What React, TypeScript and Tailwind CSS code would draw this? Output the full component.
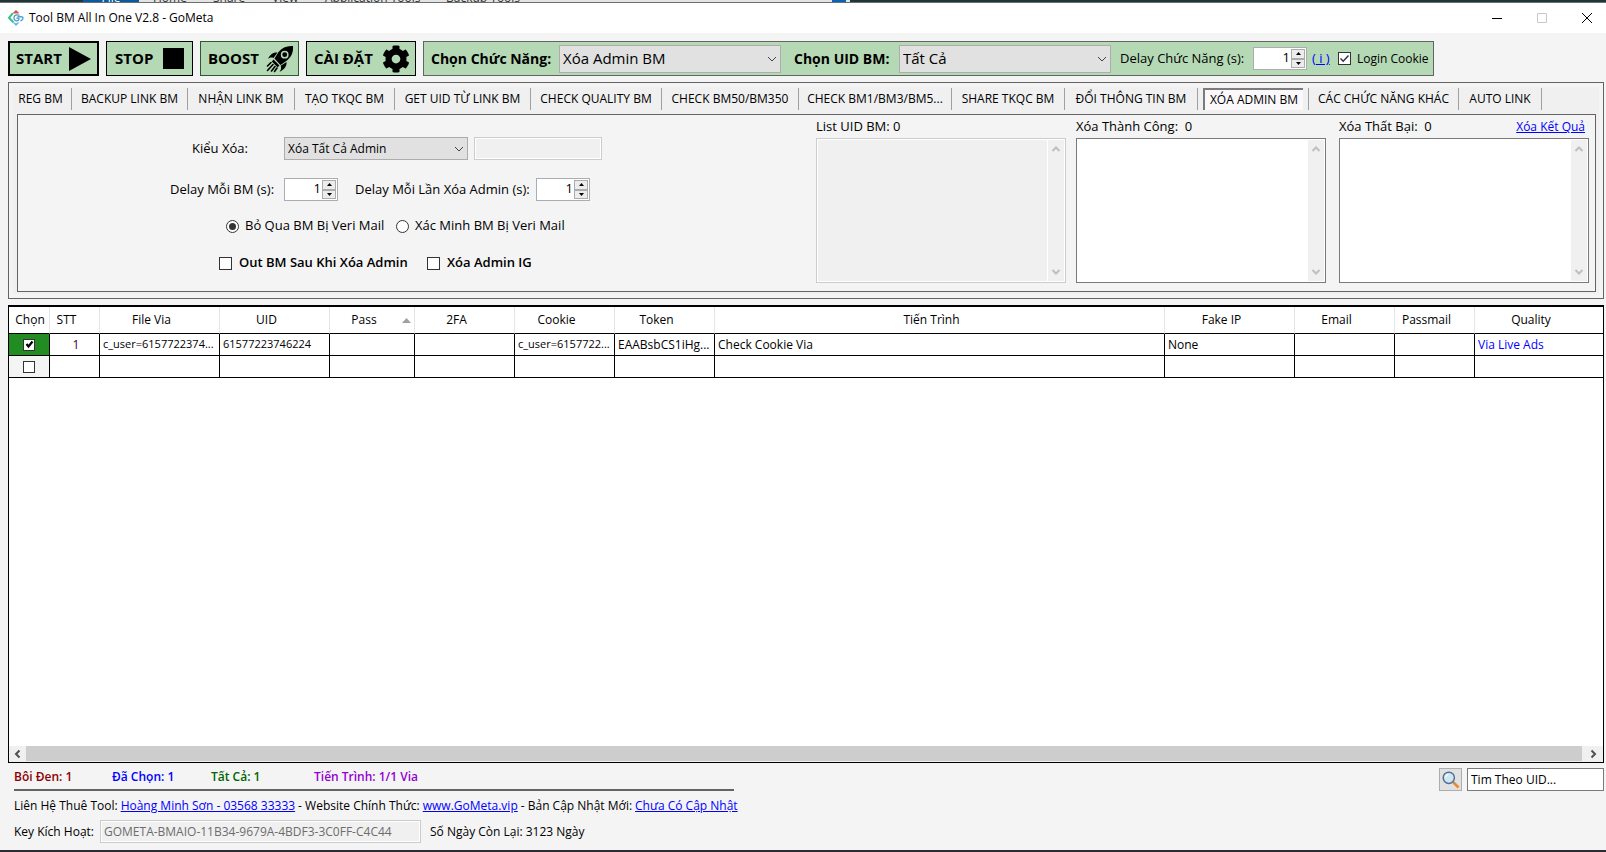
import React, { useState } from "react";
import { FaCog } from "react-icons/fa";

type Tab = { name: string; width: string };

const TABS: Tab[] = [
  { name: "REG BM", width: "w-[58px] pr-1" },
  { name: "BACKUP LINK BM", width: "w-[116px]" },
  { name: "NHẬN LINK BM", width: "w-[107px]" },
  { name: "TẠO TKQC BM", width: "w-[100px]" },
  { name: "GET UID TỪ LINK BM", width: "w-[136px]" },
  { name: "CHECK QUALITY BM", width: "w-[131px]" },
  { name: "CHECK BM50/BM350", width: "w-[137px]" },
  { name: "CHECK BM1/BM3/BM5...", width: "w-[153px]" },
  { name: "SHARE TKQC BM", width: "w-[113px]" },
  { name: "ĐỔI THÔNG TIN BM", width: "w-[133px]" },
  { name: "XÓA ADMIN BM", width: "w-[111px]" },
  { name: "CÁC CHỨC NĂNG KHÁC", width: "w-[150px]" },
  { name: "AUTO LINK", width: "w-[83px]" },
];

const COLUMNS = [
  { name: "STT", width: "w-[50px]", cell: "text-center text-[#3a003a]" },
  { name: "File Via", width: "w-[120px]", cell: "text-[11px]" },
  { name: "UID", width: "w-[110px]", cell: "text-[11px]" },
  { name: "Pass", width: "w-[85px]", cell: "" },
  { name: "2FA", width: "w-[100px]", cell: "" },
  { name: "Cookie", width: "w-[100px]", cell: "text-[11px]" },
  { name: "Token", width: "w-[100px]", cell: "" },
  { name: "Tiến Trình", width: "", cell: "" },
  { name: "Fake IP", width: "w-[130px]", cell: "" },
  { name: "Email", width: "w-[100px]", cell: "" },
  { name: "Passmail", width: "w-[80px]", cell: "" },
  { name: "Quality", width: "w-[128px]", cell: "text-[#0000ff]" },
];

const ROWS = [
  {
    checked: true,
    cells: ["1", "c_user=6157722374...", "61577223746224", "", "", "c_user=6157722...", "EAABsbCS1iHg...", "Check Cookie Via", "None", "", "", "Via Live Ads"],
  },
  { checked: false, cells: ["", "", "", "", "", "", "", "", "", "", "", ""] },
];

function Chevron({ className, d = "M1 3l4 4 4-4" }: { className: string; d?: string }) {
  return (
    <svg viewBox="0 0 10 10" className={className} fill="none" stroke="currentColor" aria-hidden="true">
      <path d={d} />
    </svg>
  );
}

function Select({ id, label, options, className, textClass }: { id: string; label: string; options: string[]; className: string; textClass: string }) {
  return (
    <span className={`grid shrink-0 items-center ${className}`}>
      <select
        id={id}
        aria-label={label}
        className={`col-start-1 row-start-1 h-full w-full appearance-none border border-[#adadad] bg-[#e1e1e1] pl-[3px] text-black outline-none ${textClass}`}
      >
        {options.map((o) => (
          <option key={o}>{o}</option>
        ))}
      </select>
      <Chevron className="pointer-events-none col-start-1 row-start-1 mr-1 h-[10px] w-[10px] justify-self-end text-[#444]" />
    </span>
  );
}

function Spinner({ id }: { id: string }) {
  const [value, setValue] = useState(1);
  return (
    <span className="flex h-[23px] w-[54px] shrink-0 border border-[#abadb3] bg-white p-px">
      <input
        id={id}
        type="text"
        inputMode="numeric"
        value={value}
        onChange={(e) => setValue(Number(e.target.value) || 0)}
        className="h-[16px] min-w-0 flex-1 bg-transparent pr-px text-right text-[13px] leading-[16px] outline-none"
      />
      <span className="flex w-[14px] flex-col">
        <button type="button" aria-label="Tăng" onClick={() => setValue(value + 1)} className="flex flex-1 items-center justify-center border border-[#acacac] bg-[#ececec]">
          <svg viewBox="0 0 5 3" className="h-[3px] w-[5px]" aria-hidden="true"><path d="M0 3L2.500 0 5 3z" /></svg>
        </button>
        <button type="button" aria-label="Giảm" onClick={() => setValue(Math.max(0, value - 1))} className="flex flex-1 items-center justify-center border border-[#acacac] bg-[#ececec]">
          <svg viewBox="0 0 5 3" className="h-[3px] w-[5px]" aria-hidden="true"><path d="M0 0L2.500 3 5 0z" /></svg>
        </button>
      </span>
    </span>
  );
}

function Check({ id, label, defaultChecked, small, bold }: { id: string; label?: string; defaultChecked?: boolean; small?: boolean; bold?: boolean }) {
  return (
    <span className="grid shrink-0 place-items-center">
      <input
        id={id}
        type="checkbox"
        aria-label={label}
        defaultChecked={defaultChecked}
        className={`peer col-start-1 row-start-1 appearance-none border border-[#333] bg-white ${small ? "size-[12px]" : "size-[13px]"}`}
      />
      <svg viewBox="0 0 13 13" className="pointer-events-none invisible col-start-1 row-start-1 size-[13px] peer-checked:visible" fill="none" stroke={bold ? "#000" : "#333"} strokeWidth={bold ? 2.2 : 1.4} aria-hidden="true">
        <path d={bold ? "M3.500 6l2 2.500 4-5" : "M2.500 6.500l2.700 2.700 5.300-5.700"} />
      </svg>
    </span>
  );
}

function Radio({ id, defaultChecked }: { id: string; defaultChecked?: boolean }) {
  return (
    <span className="grid shrink-0 place-items-center">
      <input id={id} type="radio" name="veri" defaultChecked={defaultChecked} className="peer col-start-1 row-start-1 size-[13px] appearance-none rounded-full border border-[#333] bg-white" />
      <span className="pointer-events-none invisible col-start-1 row-start-1 size-[7px] rounded-full bg-[#333] peer-checked:visible" />
    </span>
  );
}

function ListBox({ id, disabled, children }: { id: string; disabled?: boolean; children: React.ReactNode }) {
  return (
    <div className="flex w-[250px] flex-col">
      <div className="flex h-[23px] justify-between pr-1 text-[13px] leading-[23px] whitespace-pre">{children}</div>
      <div className={`flex h-[145px] border bg-white p-px ${disabled ? "border-[#ccc]" : "border-[#7a7a7a]"}`}>
        <textarea id={id} disabled={disabled} className="min-w-0 flex-1 resize-none overflow-hidden bg-white outline-none disabled:bg-[#f0f0f0]" />
        <div className="ml-px flex w-[16px] flex-col items-center justify-between bg-[#f0f0f0] py-1 text-[#bfbfbf]">
          <Chevron className="size-[10px] stroke-2" d="M1.500 7L5 3.500 8.500 7" />
          <Chevron className="size-[10px] stroke-2" d="M1.500 3L5 6.500 8.500 3" />
        </div>
      </div>
    </div>
  );
}

function Logo() {
  return (
    <svg viewBox="0 0 16 16" className="h-4 w-4 shrink-0" fill="none" aria-hidden="true">
      <path d="M4.800 3L8 0l3.200 3-1 .600H5.600z" fill="#d9534a" />
      <path d="M4.800 3.200L1 7.800l4.300 4.400" stroke="#35c08a" strokeWidth="2" />
      <path d="M4.800 12.600L8 16l3.400-3.400-1.200-.400L8 13.500l-2-1.300z" fill="#5ab4f0" />
      <path d="M11.500 5.400C9.300 4.500 5.900 5 5.900 8c0 2.800 3.200 3.300 4.500 2.200.700-.600.700-1.500.300-2H8.300" stroke="#4b95c9" strokeWidth="1.300" />
      <path d="M9.500 6.800h3.800c2.700 0 2 3-.800 4.200" stroke="#4aa3dd" strokeWidth="1.400" />
    </svg>
  );
}

function Rocket() {
  return (
    <svg viewBox="0 0 28 28" className="size-7" aria-hidden="true">
      <path fillRule="evenodd" d="M27 1C21 .500 16 2.500 12.500 7L8.500 13.500 14.500 20 21 15.500C25.500 12 27.500 7 27 1zM18.700 5.800a3.900 3.900 0 1 1 0 7.800 3.900 3.900 0 0 1 0-7.800z" />
      <circle cx="18.700" cy="9.700" r="2.400" />
      <path d="M11.500 7.500C7 7 4 9.500 2 14c2-1.500 3.500-1.700 5.500-1zM20.500 17c.5 4-2 7.500-7 9.800 1.700-2 2-3.800 1.200-6z" />
      <path d="M7.500 14.500l6 6-2 1.800-5.700-5.700z" />
      <path d="M5 17.500L1.500 21M7 19.500L1.500 25.500M9 21.500L5.500 26M11 23l-2.500 3.500" stroke="#000" strokeWidth="1.600" strokeLinecap="round" />
    </svg>
  );
}

function Magnifier() {
  return (
    <svg viewBox="0 0 18 18" className="size-[18px]" fill="none" aria-hidden="true">
      <path d="M11.500 11.500l5 5" stroke="#f08a24" strokeWidth="2.600" />
      <path d="M10.500 10.500l2 2" stroke="#8a93a0" strokeWidth="1.500" />
      <circle cx="6.800" cy="6.800" r="5.600" fill="#cfe6f7" stroke="#56708f" strokeWidth="1.500" />
      <path d="M3.500 6.500a3.500 3.500 0 0 1 3-3" stroke="#fff" strokeWidth="1.200" />
    </svg>
  );
}

const toolButton = "flex h-[35px] shrink-0 items-center justify-between bg-[#b4d9b4] text-[15px] font-bold whitespace-nowrap";

export default function App() {
  const [active, setActive] = useState("XÓA ADMIN BM");
  return (
    <div className="flex min-h-screen flex-col overflow-x-hidden bg-[#f4f4f4] font-['Open_Sans','Noto_Sans',sans-serif] text-[12px] text-black">
      <div aria-hidden="true" className="flex h-[3px] items-end overflow-hidden border-b border-[#6a6f70] bg-[#22363a] pl-[83px] leading-[8px] text-[#333]">
        <span className="w-[56px] bg-[#0b5a9f] text-center text-white">File</span>
        <span className="flex w-[711px] bg-[#e4e4e4] pl-[14px] whitespace-nowrap">
          <span className="w-[60px]">Home</span>
          <span className="w-[59px]">Share</span>
          <span className="w-[53px]">View</span>
          <span className="w-[121px]">Application Tools</span>
          <span className="flex-1">Backup Tools</span>
          <span className="mr-1 h-[8px] w-[14px] bg-[#0b63b5]" />
        </span>
      </div>

      <header className="flex h-[30px] items-center bg-white pr-[14px] pl-2 text-[12px]">
        <Logo />
        <h1 className="ml-[5px] flex-1">Tool BM All In One V2.8 - GoMeta</h1>
        <div className="flex gap-[35px]">
          <button type="button" aria-label="Thu nhỏ">
            <svg viewBox="0 0 10 10" className="size-[10px]" stroke="#000"><path d="M0 5.500h10" /></svg>
          </button>
          <button type="button" aria-label="Phóng to" disabled>
            <svg viewBox="0 0 10 10" className="size-[10px]" stroke="#c8c8c8" fill="none"><path d="M.5.5h9v9h-9z" /></svg>
          </button>
          <button type="button" aria-label="Đóng">
            <svg viewBox="0 0 10 10" className="size-[10px]" stroke="#000"><path d="M0 0l10 10M10 0L0 10" /></svg>
          </button>
        </div>
      </header>

      <main className="flex flex-1 flex-col px-2 pt-2 pr-[2px]">
        <div className="flex gap-[7px]">
          <button type="button" className={`${toolButton} w-[91px] border-2 border-black pr-[6px] pl-[6px]`}>
            START
            <svg viewBox="0 0 22 24" className="h-6 w-[22px]" aria-hidden="true"><path d="M0 0l22 12L0 24z" /></svg>
          </button>
          <button type="button" className={`${toolButton} w-[87px] border border-black pr-2 pl-2`}>
            STOP
            <svg viewBox="0 0 21 21" className="size-[21px]" aria-hidden="true"><path d="M0 0h21v21H0z" /></svg>
          </button>
          <button type="button" className={`${toolButton} w-[99px] border border-[#2f5a2f] pr-1 pl-[7px]`}>
            BOOST
            <Rocket />
          </button>
          <button type="button" className={`${toolButton} w-[110px] border border-black pr-[5px] pl-[7px]`}>
            CÀI ĐẶT
            <FaCog className="size-7" />
          </button>
          <div className="flex h-[35px] w-[1011px] items-center border border-[#646464] bg-[#b4d9b4] pl-[7px] whitespace-nowrap">
            <label htmlFor="function" className="w-[128px] text-[14px] font-bold">Chọn Chức Năng:</label>
            <Select id="function" label="Chọn Chức Năng" options={["Xóa Admin BM", "Reg BM"]} className="h-[28px] w-[222px]" textClass="text-[15px]" />
            <label htmlFor="uid" className="ml-[13px] w-[105px] text-[14px] font-bold">Chọn UID BM:</label>
            <Select id="uid" label="Chọn UID BM" options={["Tất Cả"]} className="h-[28px] w-[212px]" textClass="text-[15px]" />
            <label htmlFor="delay" className="ml-[9px] w-[133px] text-[13px]">Delay Chức Năng (s):</label>
            <Spinner id="delay" />
            <a href="#info" className="ml-[5px] w-[26px] text-[13px] text-[#0000ff] underline">( i )</a>
            <Check id="login" defaultChecked />
            <label htmlFor="login" className="ml-[6px] text-[12px]">Login Cookie</label>
          </div>
        </div>

        <section className="mt-[6px] border border-[#646464] bg-[#f0f0f0] px-2 pt-[5px] pb-[6px] shadow-[inset_0_0_0_4px_#f4f4f4]">
          <div role="tablist" className="-ml-[3px] flex h-[22px]">
            {TABS.map((t) => (
              <div key={t.name} className={`flex shrink-0 border-r border-[#a0a0a0] ${t.width}`}>
                <button
                  type="button"
                  role="tab"
                  aria-selected={active === t.name}
                  onClick={() => setActive(t.name)}
                  className={
                    active === t.name
                      ? "mx-[5px] flex-1 border-t-2 border-l-2 border-[#7b7b7b] bg-[#fbf8fb] text-[12px] whitespace-nowrap"
                      : "flex-1 text-[12px] whitespace-nowrap"
                  }
                >
                  {t.name}
                </button>
              </div>
            ))}
          </div>

          <div className="mt-1 mr-[-1px] flex h-[178px] border border-[#646464] bg-[#f4f4f4]">
            <form className="flex-1 pt-[22px] text-[13px] whitespace-nowrap" onSubmit={(e) => e.preventDefault()}>
              <div className="flex h-[23px] items-center pl-[152px]">
                <label htmlFor="kind" className="w-[114px] pl-[22px]">Kiểu Xóa:</label>
                <Select id="kind" label="Kiểu Xóa" options={["Xóa Tất Cả Admin"]} className="h-[23px] w-[184px]" textClass="text-[12px]" />
                <input aria-label="Giá trị" disabled className="ml-[6px] h-[23px] w-[128px] border border-[#ccc] bg-[#f0f0f0] shadow-[inset_0_0_0_1px_#fff]" />
              </div>
              <div className="mt-[18px] flex h-[23px] items-center pl-[152px]">
                <label htmlFor="delay-bm" className="w-[114px]">Delay Mỗi BM (s):</label>
                <Spinner id="delay-bm" />
                <label htmlFor="delay-admin" className="ml-[17px] w-[181px]">Delay Mỗi Lần Xóa Admin (s):</label>
                <Spinner id="delay-admin" />
              </div>
              <div className="mt-[16px] flex h-[18px] items-center pl-[208px]">
                <Radio id="skip" defaultChecked />
                <label htmlFor="skip" className="w-[157px] pl-[6px]">Bỏ Qua BM Bị Veri Mail</label>
                <Radio id="verify" />
                <label htmlFor="verify" className="pl-[6px]">Xác Minh BM Bị Veri Mail</label>
              </div>
              <div className="mt-[19px] flex h-[18px] items-center pl-[201px] font-semibold">
                <Check id="out" />
                <label htmlFor="out" className="w-[195px] pl-[7px]">Out BM Sau Khi Xóa Admin</label>
                <Check id="ig" />
                <label htmlFor="ig" className="pl-[7px]">Xóa Admin IG</label>
              </div>
            </form>
            <div className="flex pr-[6px] font-medium">
              <ListBox id="list-uid" disabled>
                <label htmlFor="list-uid">List UID BM: 0</label>
              </ListBox>
              <div className="w-[10px]" />
              <ListBox id="ok">
                <label htmlFor="ok">{"Xóa Thành Công:  0"}</label>
              </ListBox>
              <div className="w-[13px]" />
              <ListBox id="fail">
                <label htmlFor="fail">{"Xóa Thất Bại:  0"}</label>
                <a href="#clear" className="text-[12px] font-normal text-[#0000ff] underline">Xóa Kết Quả</a>
              </ListBox>
            </div>
          </div>
        </section>

        <section className="mt-[6px] flex flex-1 flex-col border border-t-2 border-black bg-white">
          <div className="flex-1">
            <table className="w-full table-fixed border-separate border-spacing-0">
              <thead>
                <tr className="h-[27px]">
                  <th className="w-[41px] border-r border-b border-r-[#e5e5e5] border-b-black p-0 pl-[2px] font-normal">Chọn</th>
                  {COLUMNS.map((c) => (
                    <th key={c.name} className={`border-r border-b border-r-[#e5e5e5] border-b-black p-0 font-normal last:border-r-0 ${c.width}`}>
                      <span className="flex items-center">
                        <span className="flex-1 text-center">{c.name}</span>
                        <span className="flex w-[16px] justify-center">
                          {c.name === "Pass" && (
                            <svg viewBox="0 0 9 5" className="h-[5px] w-[9px]" fill="#a0a0a0" aria-hidden="true"><path d="M0 5L4.500 0 9 5z" /></svg>
                          )}
                        </span>
                      </span>
                    </th>
                  ))}
                </tr>
              </thead>
              <tbody>
                {ROWS.map((row, i) => (
                  <tr key={i} className="h-[22px]">
                    <td className={`border-r border-b border-black p-0 ${row.checked ? "bg-[#228b22]" : "bg-[#f4f4f4]"}`}>
                      <span className="flex justify-center">
                        <Check id={`row-${i}`} label="Chọn" defaultChecked={row.checked} small bold />
                      </span>
                    </td>
                    {row.cells.map((cell, j) => (
                      <td key={j} className={`border-r border-b border-black py-0 pr-0 pl-[3px] whitespace-nowrap last:border-r-0 ${COLUMNS[j].cell}`}>
                        {cell}
                      </td>
                    ))}
                  </tr>
                ))}
              </tbody>
            </table>
          </div>
          <div className="flex h-[16px] items-center bg-[#f0f0f0] text-[#505050]">
            <span className="flex w-[17px] justify-center"><Chevron className="size-[10px] stroke-2" d="M6.500 1.500L3 5l3.500 3.500" /></span>
            <span className="h-[15px] flex-1 self-start bg-[#cdcdcd]" />
            <span className="flex w-[21px] justify-center"><Chevron className="size-[10px] stroke-2" d="M3.500 1.500L7 5 3.500 8.500" /></span>
          </div>
        </section>

        <footer className="flex h-[87px] justify-between pt-[5px]">
          <div className="pl-[6px] whitespace-nowrap">
            <div className="flex h-[23px] w-[720px] border-b-2 border-[#646464] leading-[18px] font-semibold">
              <span className="w-[98px] text-[#8b0000]">Bôi Đen: 1</span>
              <span className="w-[99px] text-[#0000ff]">Đã Chọn: 1</span>
              <span className="w-[103px] text-[#006400]">Tất Cả: 1</span>
              <span className="text-[#9400d3]">Tiến Trình: 1/1 Via</span>
            </div>
            <div className="flex h-[29px] items-center gap-[3px]">
              <span>Liên Hệ Thuê Tool:</span>
              <a href="#contact" className="text-[#0000ff] underline">Hoàng Minh Sơn - 03568 33333</a>
              <span>- Website Chính Thức:</span>
              <a href="#site" className="text-[#0000ff] underline">www.GoMeta.vip</a>
              <span>- Bản Cập Nhật Mới:</span>
              <a href="#update" className="text-[#0000ff] underline">Chưa Có Cập Nhật</a>
            </div>
            <div className="flex h-[23px] items-center">
              <label htmlFor="key" className="w-[86px]">Key Kích Hoạt:</label>
              <input id="key" disabled defaultValue="GOMETA-BMAIO-11B34-9679A-4BDF3-3C0FF-C4C44" className="h-[23px] w-[321px] border border-[#ccc] bg-[#f0f0f0] pl-[3px] text-[#6d6d6d] shadow-[inset_0_0_0_1px_#fff]" />
              <span className="ml-[9px]">Số Ngày Còn Lại: 3123 Ngày</span>
            </div>
          </div>
          <div className="flex h-[23px] gap-[5px]">
            <button type="button" aria-label="Tìm" className="flex size-[23px] items-center justify-center border border-[#adadad] bg-[#e1e1e1]">
              <Magnifier />
            </button>
            <input aria-label="Tìm Theo UID" defaultValue="Tim Theo UID..." className="h-[23px] w-[137px] border border-[#7a7a7a] bg-white pl-[3px] outline-none" />
          </div>
        </footer>
      </main>
      <div className="h-[2px] bg-[#2c2b30]" />
    </div>
  );
}
